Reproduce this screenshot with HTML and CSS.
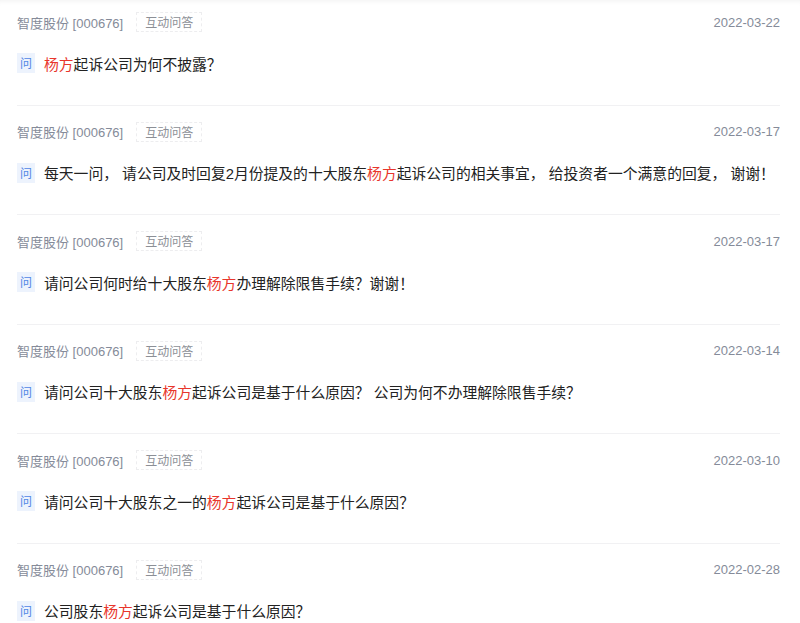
FILE: index.html
```html
<!DOCTYPE html>
<html lang="zh-CN">
<head>
<meta charset="utf-8">
<title>互动问答</title>
<link rel="stylesheet" href="styles.css">
</head>
<body>
<div class="list">
  <div class="item">
    <div class="head">
      <span class="stock">智度股份 [000676]</span>
      <span class="tag">互动问答</span>
      <span class="date">2022-03-22</span>
    </div>
    <div class="q"><span class="badge">问</span><span class="text"><em>杨方</em>起诉公司为何不披露？</span></div>
  </div>
  <div class="item">
    <div class="head">
      <span class="stock">智度股份 [000676]</span>
      <span class="tag">互动问答</span>
      <span class="date">2022-03-17</span>
    </div>
    <div class="q"><span class="badge">问</span><span class="text">每天一问， 请公司及时回复2月份提及的十大股东<em>杨方</em>起诉公司的相关事宜， 给投资者一个满意的回复， 谢谢！</span></div>
  </div>
  <div class="item">
    <div class="head">
      <span class="stock">智度股份 [000676]</span>
      <span class="tag">互动问答</span>
      <span class="date">2022-03-17</span>
    </div>
    <div class="q"><span class="badge">问</span><span class="text">请问公司何时给十大股东<em>杨方</em>办理解除限售手续？谢谢！</span></div>
  </div>
  <div class="item">
    <div class="head">
      <span class="stock">智度股份 [000676]</span>
      <span class="tag">互动问答</span>
      <span class="date">2022-03-14</span>
    </div>
    <div class="q"><span class="badge">问</span><span class="text">请问公司十大股东<em>杨方</em>起诉公司是基于什么原因？ 公司为何不办理解除限售手续？</span></div>
  </div>
  <div class="item">
    <div class="head">
      <span class="stock">智度股份 [000676]</span>
      <span class="tag">互动问答</span>
      <span class="date">2022-03-10</span>
    </div>
    <div class="q"><span class="badge">问</span><span class="text">请问公司十大股东之一的<em>杨方</em>起诉公司是基于什么原因？</span></div>
  </div>
  <div class="item">
    <div class="head">
      <span class="stock">智度股份 [000676]</span>
      <span class="tag">互动问答</span>
      <span class="date">2022-02-28</span>
    </div>
    <div class="q"><span class="badge">问</span><span class="text">公司股东<em>杨方</em>起诉公司是基于什么原因？</span></div>
  </div>
</div>
</body>
</html>
```

FILE: styles.css
```css
html, body {
  margin: 0;
  padding: 0;
  background: #ffffff;
}
body {
  font-family: "Liberation Sans", "Noto Sans CJK SC", sans-serif;
  height: 623px;
  overflow: hidden;
  box-shadow: inset 0 6px 6px -6px rgba(0, 0, 0, 0.08);
}
.list {
  padding: 0 20px 0 17px;
}
.item {
  padding: 16px 0 30.5px;
  border-bottom: 1px solid #f1f1f3;
}
.item:first-child {
  padding-top: 12px;
}
.head {
  display: flex;
  align-items: center;
  height: 20px;
  font-size: 13px;
  color: #858b99;
}
.stock {
  white-space: nowrap;
}
.tag {
  margin-left: 13px;
  height: 18px;
  line-height: 18px;
  padding: 0 8px;
  border: 1px dashed #ededef;
  font-size: 12px;
  color: #8c8f96;
  font-family: "Noto Sans CJK SC", sans-serif;
}
.date {
  margin-left: auto;
  font-size: 13px;
  color: #858b99;
}
.q {
  display: flex;
  align-items: center;
  margin-top: 20px;
  height: 22px;
}
.badge {
  width: 18px;
  height: 20px;
  line-height: 20px;
  text-align: center;
  background: #edf3fd;
  color: #4f86e6;
  font-size: 12px;
  font-family: "Noto Sans CJK SC", sans-serif;
  margin-right: 9px;
  flex: none;
}
.text {
  font-size: 14.8px;
  color: #222222;
  white-space: nowrap;
  font-family: "Liberation Sans", "Noto Sans CJK SC", sans-serif;
}
.text em {
  font-style: normal;
  color: #e8362c;
}
```
